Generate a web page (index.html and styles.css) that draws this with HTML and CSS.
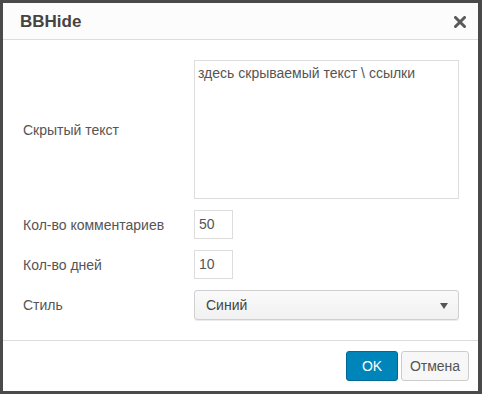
FILE: index.html
```html
<!DOCTYPE html>
<html>
<head>
<meta charset="utf-8">
<link rel="stylesheet" href="styles.css">
</head>
<body>
<div class="dialog">
  <div class="header">
    <div class="title">BBHide</div>
    <svg class="close" width="12" height="12" viewBox="0 0 12 12"><path d="M1.5 1.5 L10.5 10.5 M10.5 1.5 L1.5 10.5" stroke="#5a5a5a" stroke-width="3" stroke-linecap="round"/></svg>
  </div>
  <div class="content">
    <div class="row row-text">
      <div class="label">Скрытый текст</div>
      <div class="textarea">здесь скрываемый текст \ ссылки</div>
    </div>
    <div class="row">
      <div class="label">Кол-во комментариев</div>
      <div class="input">50</div>
    </div>
    <div class="row">
      <div class="label">Кол-во дней</div>
      <div class="input">10</div>
    </div>
    <div class="row">
      <div class="label">Стиль</div>
      <div class="select"><span>Синий</span><span class="arrow"></span></div>
    </div>
  </div>
  <div class="footer">
    <div class="btn btn-primary">OK</div>
    <div class="btn btn-default">Отмена</div>
  </div>
</div>
</body>
</html>
```

FILE: styles.css
```css
html, body {
  margin: 0;
  padding: 0;
}
body {
  width: 482px;
  height: 394px;
  background: #4a4a4a;
  font-family: "Liberation Sans", Arial, sans-serif;
  font-size: 14px;
  color: #555;
  overflow: hidden;
}
.dialog {
  margin: 3px 0 0 3px;
  width: 475px;
  height: 388px;
  background: #fff;
  display: flex;
  flex-direction: column;
}
.header {
  background: #fcfcfc;
  border-bottom: 1px solid #dcdcdc;
  display: flex;
  align-items: center;
  justify-content: space-between;
  padding: 0 12px 0 17px;
  box-sizing: border-box;
  height: 37px;
}
.title {
  font-weight: bold;
  font-size: 17px;
  color: #444;
  margin-top: 1px;
}
.close {
  display: block;
  margin-top: 1px;
}
.content {
  flex: 1;
  padding: 20px 19px 0 20px;
  display: flex;
  flex-direction: column;
  gap: 11px;
}
.row {
  display: flex;
  align-items: center;
}
.label {
  width: 171px;
  flex: none;
}
.textarea {
  width: 265px;
  height: 139px;
  box-sizing: border-box;
  border: 1px solid #ddd;
  padding: 3px 3px;
  line-height: 18px;
  color: #555;
}
.input {
  width: 39px;
  height: 29px;
  box-sizing: border-box;
  border: 1px solid #ddd;
  padding: 0 4px;
  line-height: 27px;
  color: #555;
}
.select {
  width: 265px;
  height: 30px;
  box-sizing: border-box;
  border: 1px solid #cfcfcf;
  border-radius: 3px;
  background: linear-gradient(#fafafa, #f1f1f1);
  box-shadow: 0 1px 0 rgba(0,0,0,0.08);
  display: flex;
  align-items: center;
  justify-content: space-between;
  padding: 0 10px 0 11px;
  color: #444;
}
.arrow {
  width: 0;
  height: 0;
  border-left: 4px solid transparent;
  border-right: 4px solid transparent;
  border-top: 6px solid #555;
  margin-top: 1px;
}
.footer {
  height: 50px;
  border-top: 1px solid #dcdcdc;
  display: flex;
  justify-content: flex-end;
  align-items: center;
  gap: 3px;
  padding: 0 9px 0 0;
  box-sizing: border-box;
  margin-bottom: 1px;
}
.btn {
  height: 30px;
  box-sizing: border-box;
  border-radius: 3px;
  display: flex;
  align-items: center;
  justify-content: center;
  font-size: 14px;
}
.btn-primary {
  width: 52px;
  background: #0085ba;
  border: 1px solid #006799;
  color: #fff;
}
.btn-default {
  width: 68px;
  background: #f7f7f7;
  border: 1px solid #ccc;
  color: #555;
}
```
